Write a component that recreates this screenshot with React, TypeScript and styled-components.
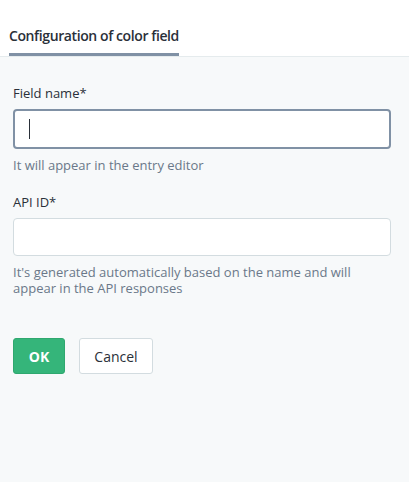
import React from "react";
import styled, { createGlobalStyle } from "styled-components";

const Global = createGlobalStyle`
  html, body { margin: 0; padding: 0; height: 100%; background: #f7f9fa; }
  #root { min-height: 100%; }
  * { box-sizing: border-box; }
  body { font-family: "Open Sans", "Noto Sans", sans-serif; color: #2a3039; }
`;

const Page = styled.div`
  min-height: 482px;
  background: #f7f9fa;
  display: flex;
  flex-direction: column;
`;

const Header = styled.div`
  background: #fff;
  border-bottom: 1px solid #e5ebed;
  height: 57px;
  display: flex;
  align-items: flex-end;
  padding-left: 9px;
`;

const Tab = styled.div`
  font-size: 14px;
  font-weight: 600;
  line-height: 20px;
  color: #2a3039;
  padding: 26px 0 7px;
  border-bottom: 3px solid #8091a5;
  letter-spacing: -0.4px;
`;

const Form = styled.form`
  padding: 26px 18px 0 13px;
  display: flex;
  flex-direction: column;
`;

const Field = styled.div`
  display: flex;
  flex-direction: column;
  margin-bottom: 19px;
`;

const Label = styled.label`
  font-size: 13px;
  line-height: 20px;
  color: #2a3039;
  margin-bottom: 6px;
`;

const Input = styled.input<{ $focused?: boolean }>`
  height: ${(p) => (p.$focused ? 40 : 38)}px;
  width: 100%;
  border: ${(p) => (p.$focused ? "2px solid #8091a5" : "1px solid #d3dce0")};
  border-radius: 4px;
  background: #fff;
  padding: 0 14px;
  font: inherit;
  font-size: 14px;
  outline: none;
  caret-color: #2a3039;
`;

const Cursor = styled.span`
  position: absolute;
  left: 16px;
  top: 10px;
  width: 1px;
  height: 20px;
  background: #2a3039;
`;

const InputWrap = styled.div`
  position: relative;
`;

const Help = styled.div`
  font-size: 13px;
  line-height: 16px;
  color: #6a7889;
  margin-top: 8px;
`;

const Actions = styled.div`
  display: flex;
  gap: 14px;
  margin-top: 23px;
`;

const Button = styled.button<{ $primary?: boolean }>`
  height: 36px;
  border-radius: 3px;
  font-family: inherit;
  font-size: 14px;
  padding: 0;
  cursor: pointer;
  background: ${(p) => (p.$primary ? "#35b57a" : "#fff")};
  color: ${(p) => (p.$primary ? "#fff" : "#2a3039")};
  border: 1px solid ${(p) => (p.$primary ? "#2fa86f" : "#d3dce0")};
  font-weight: ${(p) => (p.$primary ? 700 : 400)};
  width: ${(p) => (p.$primary ? 52 : 74)}px;
`;

export default function App() {
  return (
    <Page>
      <Global />
      <Header>
        <Tab>Configuration of color field</Tab>
      </Header>
      <Form onSubmit={(e) => e.preventDefault()}>
        <Field>
          <Label>Field name*</Label>
          <InputWrap>
            <Input $focused />
            <Cursor />
          </InputWrap>
          <Help>It will appear in the entry editor</Help>
        </Field>
        <Field>
          <Label>API ID*</Label>
          <Input />
          <Help>It's generated automatically based on the name and will appear in the API responses</Help>
        </Field>
        <Actions>
          <Button type="button" $primary>OK</Button>
          <Button type="button">Cancel</Button>
        </Actions>
      </Form>
    </Page>
  );
}
